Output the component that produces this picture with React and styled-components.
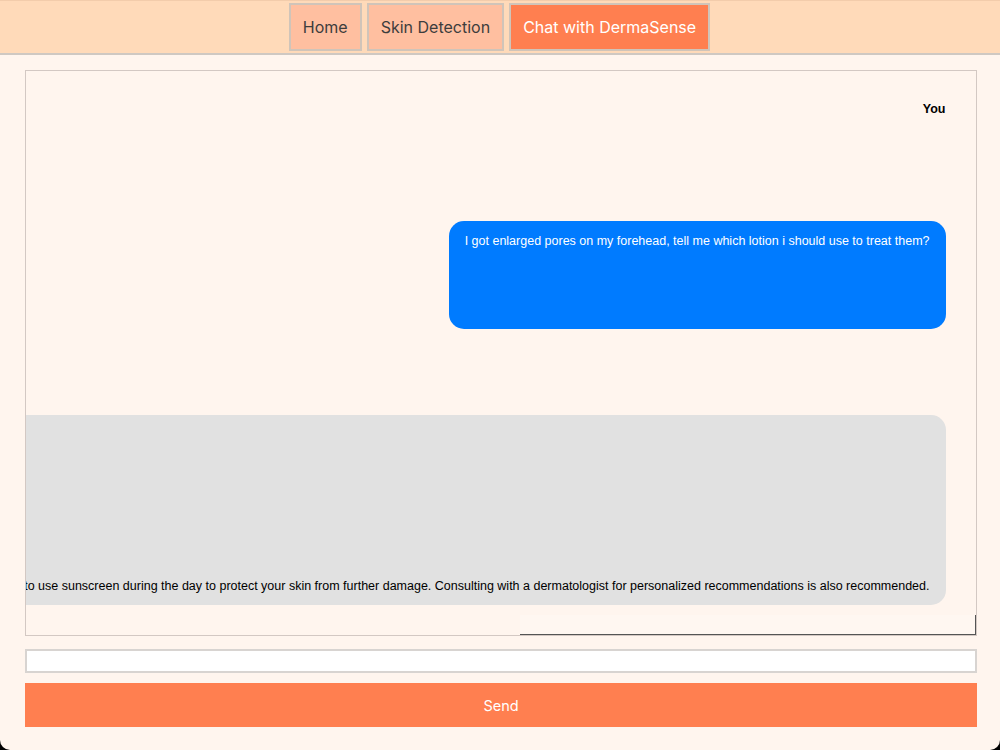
import React from "react";
import styled, { createGlobalStyle } from "styled-components";

const GlobalStyle = createGlobalStyle`
  html, body {
    margin: 0;
    padding: 0;
    background: #000;
  }
  body {
    font-family: "Liberation Sans", Arial, sans-serif;
  }
`;

const Page = styled.div`
  width: 1000px;
  height: 750px;
  background: #fff5ee;
  border-radius: 0 0 10px 10px;
  overflow: hidden;
  display: flex;
  flex-direction: column;
`;

const Nav = styled.nav`
  box-sizing: border-box;
  height: 55px;
  padding-right: 1px;
  background: #ffdab9;
  border-top: 1px solid #f3ccab;
  border-bottom: 2px solid #cfc8c2;
  display: flex;
  justify-content: center;
  align-items: center;
  gap: 5px;
`;

const NavButton = styled.button`
  box-sizing: border-box;
  height: 48px;
  padding: 0 12px;
  border: 2px solid #d0c4b9;
  background: ${(p) => (p.$active ? "#ff7f50" : "#ffbfa0")};
  color: ${(p) => (p.$active ? "#fff" : "#3d3d3d")};
  font-family: Inter, sans-serif;
  font-size: 16px;
  cursor: pointer;
`;

const Main = styled.main`
  flex: 1;
  display: flex;
  flex-direction: column;
  padding: 15px 23px 0 25px;
`;

const ChatBox = styled.div`
  position: relative;
  box-sizing: border-box;
  height: 566px;
  border: 1px solid #d3c8c3;
  padding: 0 30.5px 0 0;
  overflow: hidden;
  display: flex;
  flex-direction: column;
`;

const Sender = styled.div`
  margin-top: 31px;
  font-size: 12.5px;
  line-height: 15px;
  font-weight: bold;
  color: #000;
  text-align: right;
`;

const Row = styled.div`
  display: flex;
  justify-content: flex-end;
  margin-top: ${(p) => p.$top}px;
`;

const Bubble = styled.div`
  box-sizing: border-box;
  flex-shrink: 0;
  height: ${(p) => p.$height}px;
  padding: 13px 16px 11px;
  border-radius: 15px;
  background: ${(p) => (p.$mine ? "#007bff" : "#e1e1e1")};
  color: ${(p) => (p.$mine ? "#fff" : "#000")};
  font-size: 12.5px;
  line-height: 15px;
  white-space: nowrap;
  display: flex;
  align-items: ${(p) => (p.$mine ? "flex-start" : "flex-end")};
`;

/* leftover paint from the resized chat box, bottom right corner */
const ResizeGhost = styled.div`
  position: absolute;
  right: 0;
  bottom: 0;
  box-sizing: border-box;
  width: 456px;
  height: 20px;
  background: #fff7f1;
  border-right: 1px solid #555;
  border-bottom: 1px solid #555;
`;

const MessageInput = styled.input`
  box-sizing: border-box;
  display: block;
  width: 952px;
  height: 24px;
  margin-top: 13px;
  padding: 0 4px;
  background: #fff;
  border: 2px solid #d8d4d1;
  outline: none;
`;

const SendButton = styled.button`
  width: 952px;
  height: 44px;
  margin-top: 10px;
  border: 0;
  background: #ff7f50;
  color: #fff;
  font-family: Inter, sans-serif;
  font-size: 14.5px;
  cursor: pointer;
`;

export default function App() {
  return (
    <>
      <GlobalStyle />
      <Page>
        <Nav>
          <NavButton>Home</NavButton>
          <NavButton>Skin Detection</NavButton>
          <NavButton $active>Chat with DermaSense</NavButton>
        </Nav>
        <Main>
          <ChatBox>
            <Sender>You</Sender>
            <Row $top={104}>
              <Bubble $mine $height={108}>
                I got enlarged pores on my forehead, tell me which lotion i should use to treat them?
              </Bubble>
            </Row>
            <Row $top={86}>
              <Bubble $height={190}>
                For enlarged pores on the forehead, you can use a lotion with retinol and niacinamide. It is also important to use sunscreen during the day to protect your skin from further damage. Consulting with a dermatologist for personalized recommendations is also recommended.
              </Bubble>
            </Row>
            <ResizeGhost />
          </ChatBox>
          <MessageInput type="text" />
          <SendButton>Send</SendButton>
        </Main>
      </Page>
    </>
  );
}
